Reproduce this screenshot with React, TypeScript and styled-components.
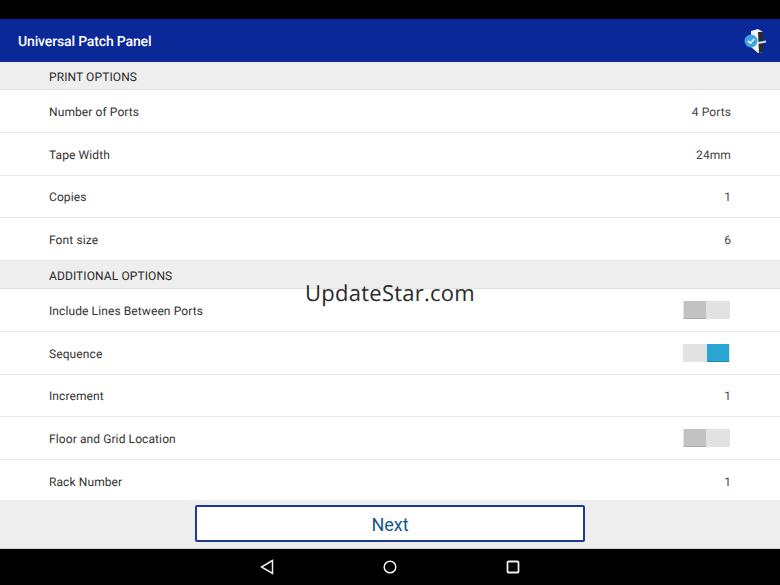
import React from "react";
import styled, { createGlobalStyle } from "styled-components";

const Global = createGlobalStyle`
  html, body { margin: 0; padding: 0; background: #000; }
  body {
    font-family: Roboto, "Liberation Sans", sans-serif;
    text-rendering: geometricPrecision;
  }
`;

const Screen = styled.div`
  position: relative;
  width: 780px;
  height: 585px;
  display: flex;
  flex-direction: column;
  overflow: hidden;
  background: #fff;
`;

const StatusBar = styled.div`
  height: 19px;
  background: #000;
  flex: none;
`;

const AppBar = styled.header`
  height: 43px;
  flex: none;
  box-sizing: border-box;
  display: flex;
  align-items: center;
  justify-content: space-between;
  padding: 0 12px 0 18px;
  background: #0a2897;
  color: #fff;
  font-size: 14px;
  font-weight: 500;
  letter-spacing: -0.15px;
`;

const AppTitle = styled.span`
  padding-top: 2px;
`;

const Content = styled.div`
  flex: 1;
  min-height: 0;
  overflow: hidden;
`;

const SectionHeader = styled.div`
  height: 28px;
  box-sizing: border-box;
  display: flex;
  align-items: center;
  padding: 2px 0 0 49px;
  background: #eeeeee;
  border-bottom: 1px solid #e2e2e2;
  color: #2a2a2a;
  font-size: 12px;
  letter-spacing: 0.1px;
`;

const Row = styled.div`
  height: 42.75px;
  box-sizing: border-box;
  display: flex;
  align-items: center;
  justify-content: space-between;
  padding: 2px 49px 0;
  border-bottom: 1px solid #e8e8e8;
  color: #333;
  font-size: 12px;
  letter-spacing: 0.1px;
`;

const Value = styled.span`
  color: #444;
`;

const Toggle = styled.div<{ $on?: boolean }>`
  width: 47px;
  height: 18px;
  margin: -2px 1px 0 0;
  display: flex;
  justify-content: ${(p) => (p.$on ? "flex-end" : "flex-start")};
  padding: 0 1px;
  box-sizing: border-box;
  background: #e2e2e2;
`;

const Thumb = styled.div<{ $on?: boolean }>`
  width: 22px;
  height: 100%;
  box-sizing: border-box;
  background: ${(p) => (p.$on ? "#29a5d3" : "#c2c2c2")};
  border-bottom: 1px solid ${(p) => (p.$on ? "#2088b0" : "#aaa")};
`;

const Footer = styled.div`
  height: 49px;
  flex: none;
  box-sizing: border-box;
  display: flex;
  justify-content: center;
  align-items: center;
  padding-bottom: 2px;
  background: #eeeeee;
  border-bottom: 1px solid #cfcfcf;
`;

const NextButton = styled.button`
  width: 390px;
  height: 37px;
  box-sizing: border-box;
  padding: 2px 0 0;
  background: #fff;
  border: 2px solid #1a3a96;
  border-radius: 2px;
  color: #14578f;
  font-family: inherit;
  font-size: 18px;
`;

const NavBar = styled.nav`
  height: 36px;
  flex: none;
  display: flex;
  justify-content: center;
  align-items: center;
  gap: 109px;
  background: #000;
`;

const Watermark = styled.div`
  position: absolute;
  left: 305px;
  top: 278px;
  font-family: "Open Sans", "Liberation Sans", sans-serif;
  font-size: 22px;
  line-height: 30px;
  color: #2b2b2b;
  letter-spacing: 0.25px;
`;

const AppIcon = () => (
  <svg width="24" height="26" viewBox="0 0 24 26">
    <path d="M7 3 L14 1 L19 4 L19 24 L14 25 L7 19 Z" fill="#f1f3f6" />
    <path d="M14 4 L19 4 L19 24 L15 25 Z" fill="#2a2a2a" />
    <path d="M14 14 L22 12.500 L22 14.500 L14 16 Z" fill="#dfe3e8" />
    <circle cx="7" cy="13" r="6.500" fill="#3ea3e6" />
    <path d="M4 13 L6.300 15.200 L10.200 11" fill="none" stroke="#fff" strokeWidth="1.600" />
  </svg>
);

const BackIcon = () => (
  <svg width="14" height="16" viewBox="0 0 14 16">
    <path d="M12.500 1.500 L1.500 8 L12.500 14.500 Z" fill="none" stroke="#eee" strokeWidth="1.500" />
  </svg>
);

const HomeIcon = () => (
  <svg width="14" height="14" viewBox="0 0 14 14">
    <circle cx="7" cy="7" r="5.800" fill="none" stroke="#eee" strokeWidth="1.500" />
  </svg>
);

const RecentIcon = () => (
  <svg width="14" height="14" viewBox="0 0 14 14">
    <rect x="1.500" y="1.500" width="11" height="11" rx="1" fill="none" stroke="#eee" strokeWidth="1.800" />
  </svg>
);

const printOptions = [
  ["Number of Ports", "4 Ports"],
  ["Tape Width", "24mm"],
  ["Copies", "1"],
  ["Font size", "6"],
];

export default function App() {
  return (
    <Screen>
      <Global />
      <StatusBar />
      <AppBar>
        <AppTitle>Universal Patch Panel</AppTitle>
        <AppIcon />
      </AppBar>
      <Content>
        <SectionHeader>PRINT OPTIONS</SectionHeader>
        {printOptions.map(([label, value]) => (
          <Row key={label}>
            <span>{label}</span>
            <Value>{value}</Value>
          </Row>
        ))}
        <SectionHeader>ADDITIONAL OPTIONS</SectionHeader>
        <Row>
          <span>Include Lines Between Ports</span>
          <Toggle>
            <Thumb />
          </Toggle>
        </Row>
        <Row>
          <span>Sequence</span>
          <Toggle $on>
            <Thumb $on />
          </Toggle>
        </Row>
        <Row>
          <span>Increment</span>
          <Value>1</Value>
        </Row>
        <Row>
          <span>Floor and Grid Location</span>
          <Toggle>
            <Thumb />
          </Toggle>
        </Row>
        <Row>
          <span>Rack Number</span>
          <Value>1</Value>
        </Row>
      </Content>
      <Footer>
        <NextButton>Next</NextButton>
      </Footer>
      <NavBar>
        <BackIcon />
        <HomeIcon />
        <RecentIcon />
      </NavBar>
      <Watermark>UpdateStar.com</Watermark>
    </Screen>
  );
}
